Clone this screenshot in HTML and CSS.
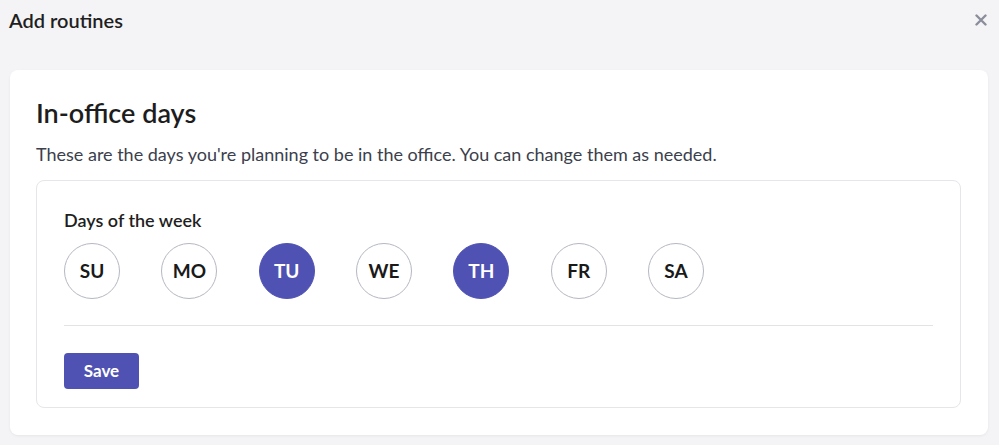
FILE: index.html
```html
<!DOCTYPE html>
<html lang="en">
<head>
<meta charset="utf-8">
<title>Add routines</title>
<link rel="stylesheet" href="styles.css">
</head>
<body>
  <header class="topbar">
    <h1 class="topbar-title">Add routines</h1>
    <button class="close-btn" aria-label="Close">
      <svg width="12" height="12" viewBox="0 0 12 12"><path d="M1.5 1.5 L10.5 10.5 M10.5 1.5 L1.5 10.5" stroke="#8a8e9c" stroke-width="2.4" stroke-linecap="round"/></svg>
    </button>
  </header>
  <main class="card">
    <h2 class="card-title">In-office days</h2>
    <p class="card-desc">These are the days you're planning to be in the office. You can change them as needed.</p>
    <section class="panel">
      <div class="panel-label">Days of the week</div>
      <div class="days">
        <button class="day">SU</button>
        <button class="day">MO</button>
        <button class="day day-on">TU</button>
        <button class="day">WE</button>
        <button class="day day-on">TH</button>
        <button class="day">FR</button>
        <button class="day">SA</button>
      </div>
      <hr class="divider">
      <button class="save-btn">Save</button>
    </section>
  </main>
</body>
</html>
```
FILE: styles.css
```css
* { box-sizing: border-box; }
html, body {
  margin: 0;
  padding: 0;
  background: #f4f4f6;
  font-family: Lato, "Open Sans", Arial, sans-serif;
  color: #242424;
}
.topbar {
  display: flex;
  align-items: center;
  justify-content: space-between;
  height: 40px;
  padding: 0 11px 0 9px;
  margin-bottom: 30px;
}
.topbar-title {
  margin: 0;
  font-size: 20px;
  font-weight: 600;
  line-height: normal;
  color: #1f1f22;
}
.close-btn {
  border: 0;
  background: none;
  padding: 0;
  width: 14px;
  height: 14px;
  display: flex;
  align-items: center;
  justify-content: center;
}
.card {
  margin: 0 11px 10px 10px;
  background: #fff;
  border-radius: 8px;
  padding: 25.5px 27px 27px 26px;
  box-shadow: 0 1px 3px rgba(0,0,0,0.06);
}
.card-title {
  margin: 0;
  font-size: 27px;
  font-weight: 600;
  line-height: normal;
  color: #1d1d20;
}
.card-desc {
  margin: 14.4px 0 15px;
  font-size: 18px;
  line-height: normal;
  color: #3b404c;
}
.panel {
  border: 1px solid #e6e6ea;
  border-radius: 8px;
  padding: 28px 27px 18px 27px;
}
.panel-label {
  font-size: 18px;
  font-weight: 600;
  line-height: normal;
  color: #1f1f22;
  margin-bottom: 12px;
}
.days {
  display: flex;
  gap: 41.33px;
}
.day {
  width: 56px;
  height: 56px;
  border-radius: 50%;
  border: 1px solid #b5b8c2;
  background: #fff;
  font-family: inherit;
  font-size: 19px;
  font-weight: 700;
  color: #1a1a1a;
  padding: 0;
  display: flex;
  align-items: center;
  justify-content: center;
}
.day-on {
  background: #4f52b2;
  border-color: #4f52b2;
  color: #fff;
}
.divider {
  border: 0;
  border-top: 1px solid #e3e3e6;
  margin: 26px 0 27px;
}
.save-btn {
  width: 75px;
  height: 36px;
  border: 0;
  border-radius: 4px;
  background: #4f52b2;
  color: #fff;
  font-family: inherit;
  font-size: 17px;
  font-weight: 700;
  padding: 0;
}
```
